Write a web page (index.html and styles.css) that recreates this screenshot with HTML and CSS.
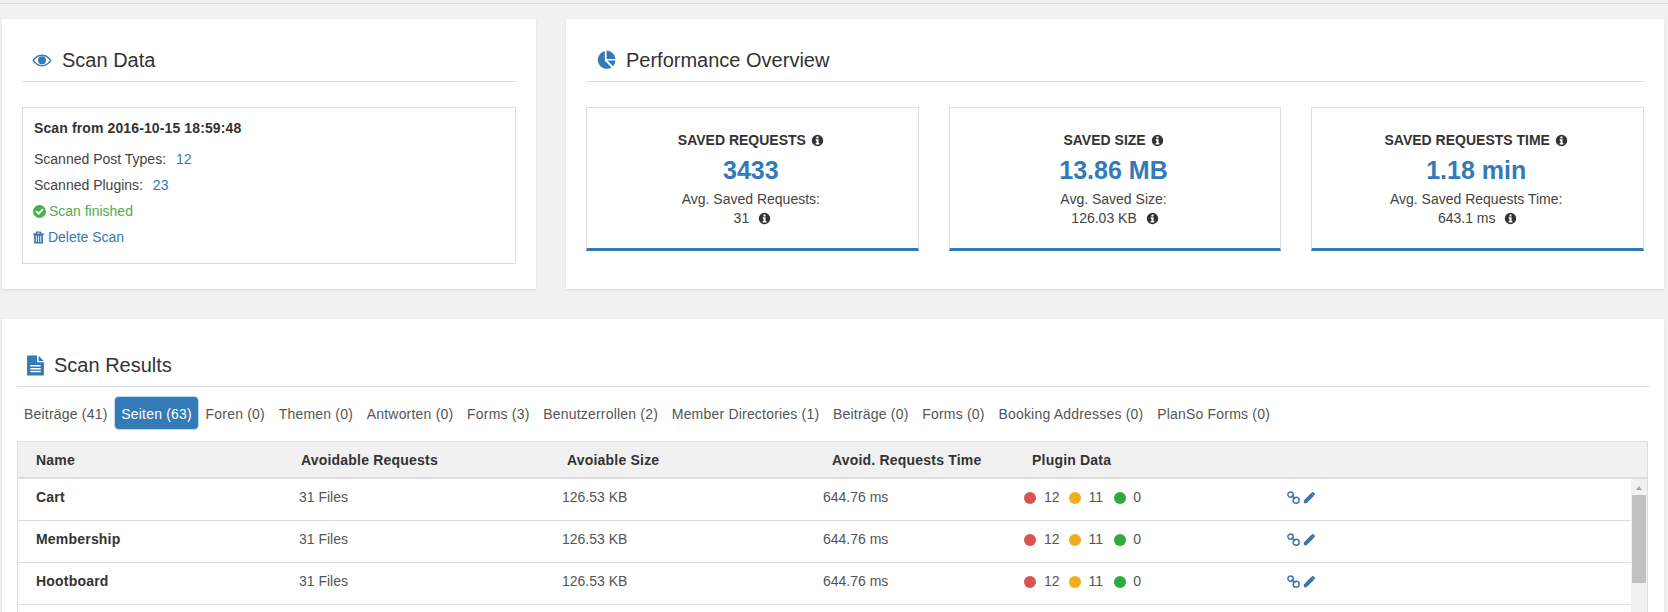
FILE: index.html
```html
<!DOCTYPE html>
<html>
<head>
<meta name="viewport" content="width=device-width, initial-scale=1">
<link rel="stylesheet" href="styles.css">
</head>
<body>

<svg class="defs" width="0" height="0">
  <symbol id="i-info" viewBox="0 0 16 16">
    <path fill-rule="evenodd" d="M8 1a7 7 0 1 0 0 14A7 7 0 0 0 8 1zM6.700 3.200h2.600v2.200H6.700zM5.800 6.600h3.500v4.600h1v1.600H5.800v-1.600h1V8.200h-1z"/>
  </symbol>
  <symbol id="i-link" viewBox="0 0 16 16">
    <g fill="none" stroke="currentColor" stroke-width="1.800">
      <circle cx="4.400" cy="4.400" r="3.300"/>
      <circle cx="11.300" cy="11.300" r="3.700"/>
      <path d="M5.500 5.500l4.600 4.400"/>
    </g>
  </symbol>
  <symbol id="i-pencil" viewBox="0 0 16 16">
    <path d="M1 11.600L10 2.600l3.400 3.400-9 9H1zM11 1.600c.6-.6 1.300-.6 1.800-.1l1.700 1.700c.5.500.5 1.200-.1 1.800l-.9.800-3.300-3.300z"/>
  </symbol>
</svg>

<div class="topline"></div>

<div class="top-row">
  <section class="panel panel-scan">
    <h2 class="panel-title">
      <svg class="title-icon eye" viewBox="0 0 22 16"><path fill-rule="evenodd" d="M11 1.500C6.200 1.500 2.600 4.600.5 8c2.100 3.400 5.700 6.500 10.500 6.500S19.400 11.400 21.500 8C19.400 4.600 15.800 1.500 11 1.500zM11 3c3.600 0 6.700 2 8.700 5-2 3-5.100 5-8.700 5S4.300 11 2.300 8C4.300 5 7.400 3 11 3z"/><circle cx="11" cy="7.600" r="4.400"/></svg>
      Scan Data
    </h2>
    <div class="scan-box">
      <p class="scan-date">Scan from 2016-10-15 18:59:48</p>
      <p>Scanned Post Types: <a class="num">12</a></p>
      <p>Scanned Plugins: <a class="num">23</a></p>
      <p class="ok">
        <svg class="small-icon" viewBox="1.500 1.500 13 13"><path fill-rule="evenodd" d="M8 1.500a6.500 6.500 0 1 0 0 13 6.500 6.500 0 0 0 0-13zM3.900 8.200l1.300-1.300 1.900 1.900 3.700-3.700 1.300 1.300-5 5z"/></svg>
        Scan finished
      </p>
      <p><a class="del">
        <svg class="small-icon trash" viewBox="2 1.500 12 13"><path fill-rule="evenodd" d="M5.500 1.500h5l1 2H14V5h-1.200v9.500H3.200V5H2V3.500h2.500zM6.300 3.500h3.400l-.4-.8H6.700zM5 6v7h1V6zM7.500 6v7h1V6zM10 6v7h1V6z"/></svg>
        Delete Scan</a></p>
    </div>
  </section>

  <section class="panel panel-perf">
    <h2 class="panel-title">
      <svg class="title-icon pie" viewBox="0 0 20 20"><path d="M8.800 1.200v9.500l6.700 6.700A8.900 8.900 0 1 1 8.800 1.200z"/><path d="M10.600.4a8.800 8.800 0 0 1 8.700 8.500h-8.700z"/><path d="M11.400 10.600h8a8.800 8.800 0 0 1-2.300 5.700z"/></svg>
      Performance Overview
    </h2>
    <div class="cards">
      <div class="card">
        <div class="card-label">SAVED REQUESTS <svg class="info"><use href="#i-info"/></svg></div>
        <div class="card-value">3433</div>
        <div class="card-sub">Avg. Saved Requests:</div>
        <div class="card-sub card-avg">31 <svg class="info"><use href="#i-info"/></svg></div>
      </div>
      <div class="card">
        <div class="card-label">SAVED SIZE <svg class="info"><use href="#i-info"/></svg></div>
        <div class="card-value">13.86 MB</div>
        <div class="card-sub">Avg. Saved Size:</div>
        <div class="card-sub card-avg">126.03 KB <svg class="info"><use href="#i-info"/></svg></div>
      </div>
      <div class="card">
        <div class="card-label">SAVED REQUESTS TIME <svg class="info"><use href="#i-info"/></svg></div>
        <div class="card-value">1.18 min</div>
        <div class="card-sub">Avg. Saved Requests Time:</div>
        <div class="card-sub card-avg">643.1 ms <svg class="info"><use href="#i-info"/></svg></div>
      </div>
    </div>
  </section>
</div>

<section class="panel panel-results">
  <h2 class="panel-title">
    <svg class="title-icon file" viewBox="0 0 16 20"><path fill-rule="evenodd" d="M0 .5h9.500V7H16v12.500H0zM3 9.500v1.400h10V9.500zM3 12.300v1.400h10v-1.400zM3 15.100v1.400h10v-1.400z"/><path d="M11 .8l4.800 4.800H11z"/></svg>
    Scan Results
  </h2>
  <ul class="tabs">
    <li>Beiträge (41)</li>
    <li class="active">Seiten (63)</li>
    <li>Foren (0)</li>
    <li>Themen (0)</li>
    <li>Antworten (0)</li>
    <li>Forms (3)</li>
    <li>Benutzerrollen (2)</li>
    <li>Member Directories (1)</li>
    <li>Beiträge (0)</li>
    <li>Forms (0)</li>
    <li>Booking Addresses (0)</li>
    <li>PlanSo Forms (0)</li>
  </ul>
  <div class="table">
    <div class="thead">
      <div>Name</div>
      <div>Avoidable Requests</div>
      <div>Avoiable Size</div>
      <div>Avoid. Requests Time</div>
      <div>Plugin Data</div>
    </div>
    <div class="tbody">
      <div class="rows">
        <div class="row">
          <div class="name">Cart</div><div>31 Files</div><div>126.53 KB</div><div>644.76 ms</div>
          <div class="plugins"><i class="dot red"></i>12<i class="dot orange"></i>11<i class="dot green"></i>0</div>
          <div class="actions"><svg><use href="#i-link"/></svg><svg><use href="#i-pencil"/></svg></div>
        </div>
        <div class="row">
          <div class="name">Membership</div><div>31 Files</div><div>126.53 KB</div><div>644.76 ms</div>
          <div class="plugins"><i class="dot red"></i>12<i class="dot orange"></i>11<i class="dot green"></i>0</div>
          <div class="actions"><svg><use href="#i-link"/></svg><svg><use href="#i-pencil"/></svg></div>
        </div>
        <div class="row">
          <div class="name">Hootboard</div><div>31 Files</div><div>126.53 KB</div><div>644.76 ms</div>
          <div class="plugins"><i class="dot red"></i>12<i class="dot orange"></i>11<i class="dot green"></i>0</div>
          <div class="actions"><svg><use href="#i-link"/></svg><svg><use href="#i-pencil"/></svg></div>
        </div>
      </div>
      <div class="scrollbar">
        <div class="arrow"></div>
        <div class="thumb"></div>
      </div>
    </div>
  </div>
</section>

</body>
</html>
```

FILE: styles.css
```css
* {
  box-sizing: border-box;
}

html, body {
  height: 612px;
  overflow: hidden;
}

body {
  margin: 0;
  background: #f1f1f1;
  font-family: "Liberation Sans", Arial, sans-serif;
  font-size: 14px;
  color: #333;
}

p {
  margin: 0;
}

.defs {
  position: absolute;
}

.topline {
  height: 4px;
  border-bottom: 1px solid #ddd;
}

.top-row {
  display: flex;
  gap: 30px;
  padding: 15px 4px 0 2px;
}

.panel {
  background: #fff;
  box-shadow: 0 1px 2px rgba(0, 0, 0, 0.1);
}

.panel-scan {
  width: 534px;
  height: 270px;
  padding: 20px;
}

.panel-perf {
  flex: 1;
  height: 270px;
  padding: 20px;
}

.panel-results {
  margin: 30px 4px 0 2px;
  height: 300px;
  padding: 25px 15px 0;
}

/* Headings */
.panel-title {
  display: flex;
  align-items: center;
  height: 43px;
  margin: 0;
  padding-left: 10px;
  border-bottom: 1px solid #ddd;
  font-size: 20px;
  font-weight: normal;
}

.title-icon {
  fill: #337ab7;
  margin-right: 10px;
}

.eye {
  width: 20px;
  height: 15px;
}

.pie {
  width: 20px;
  height: 20px;
}

.file {
  width: 17px;
  height: 21px;
}

/* Scan box */
.scan-box {
  height: 157px;
  margin-top: 25px;
  padding: 7px 11px;
  border: 1px solid #ddd;
  color: #444;
}

.scan-box p {
  height: 26px;
  line-height: 26px;
}

.scan-box .scan-date {
  color: #333;
  font-weight: bold;
  letter-spacing: 0.12px;
  margin-bottom: 5px;
}

.num {
  color: #337ab7;
  margin-left: 6px;
}

.scan-box .ok {
  color: #4cae4c;
}

.del {
  color: #337ab7;
}

.small-icon {
  width: 13px;
  height: 13px;
  margin: 0 -1px 0 -1px;
  fill: currentColor;
  vertical-align: -2px;
}

.trash {
  width: 11px;
  margin-right: 0;
}

/* Cards */
.cards {
  display: flex;
  gap: 30px;
  margin-top: 25px;
}

.card {
  flex: 1;
  height: 144px;
  padding: 23px 3px 0 0;
  border: 1px solid #ddd;
  border-bottom: 3px solid #337ab7;
  text-align: center;
}

.card-label {
  font-size: 14px;
  font-weight: bold;
  line-height: 18px;
}

.card-label .info {
  margin-left: 1px;
}

.card-value {
  margin-top: 5px;
  margin-bottom: 4px;
  font-size: 25px;
  font-weight: bold;
  line-height: 32px;
  color: #337ab7;
}

.card-sub {
  line-height: 19px;
  color: #444;
}

.card-avg {
  padding-left: 3px;
}

.info {
  width: 13px;
  height: 13px;
  margin-left: 5px;
  fill: #333;
  vertical-align: -2px;
}

/* Tabs */
.tabs {
  display: flex;
  gap: 1.7px;
  margin: 0;
  padding: 10px 0 0 1px;
  list-style: none;
  height: 54px;
  letter-spacing: 0.2px;
}

.tabs li {
  height: 32px;
  padding: 0 6px;
  line-height: 34px;
  border-radius: 4px;
  white-space: nowrap;
  color: #555;
}

.tabs .active {
  background: #337ab7;
  color: #fff;
  box-shadow: 0 0 0 1px #bcd6ec;
}

/* Table */
.table {
  margin-right: 1px;
  border: 1px solid #ddd;
  border-bottom: none;
}

.thead {
  display: grid;
  grid-template-columns: 265px 266px 265px 200px 1fr;
  height: 37px;
  padding-left: 18px;
  background: #f1f1f1;
  border-bottom: 2px solid #ddd;
  font-weight: bold;
  letter-spacing: 0.2px;
  line-height: 37px;
}

.tbody {
  display: flex;
  height: 140px;
}

.rows {
  flex: 1;
}

.row {
  display: grid;
  grid-template-columns: 263px 263px 261px 201px 263px 1fr;
  height: 42px;
  padding-left: 18px;
  border-bottom: 1px solid #ddd;
  line-height: 37px;
  color: #555;
}

.name {
  color: #333;
  font-weight: bold;
  letter-spacing: 0.2px;
}

.plugins {
  display: flex;
  align-items: center;
  padding-bottom: 4px;
}

.dot {
  width: 12px;
  height: 12px;
  margin: 0 8px 0 9px;
  border-radius: 50%;
}

.dot:first-child {
  margin-left: 0;
}

.red {
  background: #d9534f;
}

.orange {
  background: #f0ad1e;
}

.green {
  margin: 0 7px 0 11px;
  background: #2eaa3f;
}

.actions {
  display: flex;
  align-items: center;
  gap: 3px;
  padding-bottom: 5px;
  color: #3f72af;
}

.actions svg {
  width: 13px;
  height: 13px;
  fill: #3f72af;
}

/* Fake scrollbar, the real one does not photograph the same */
.scrollbar {
  width: 16px;
  padding: 0 1px;
  background: #f1f1f1;
}

.arrow {
  width: 0;
  height: 0;
  margin: 7px auto 5px;
  border: 3.5px solid transparent;
  border-top: none;
  border-bottom: 4px solid #a3a3a3;
}

.thumb {
  height: 88px;
  background: #c1c1c1;
}
```
